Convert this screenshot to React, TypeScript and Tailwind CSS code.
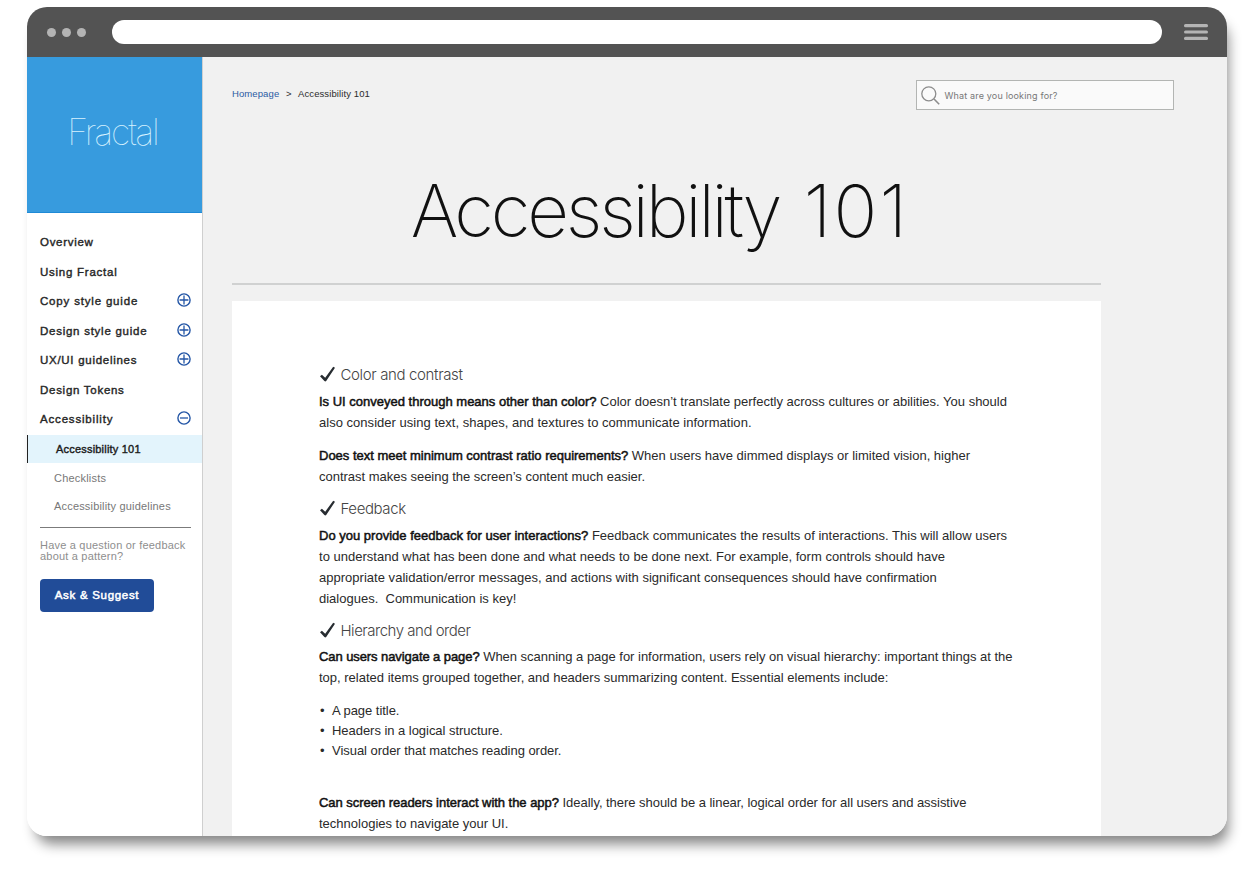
import type { ReactNode } from "react";

function Expander({ open = false }: { open?: boolean }) {
  return (
    <svg width="14" height="14" viewBox="0 0 14 14" fill="none" stroke="#2456a6" className="shrink-0">
      <circle cx="7" cy="7" r="6.1" strokeWidth="1.4" />
      <path d={open ? "M3 7H11" : "M2.6 7H11.4M7 2.6V11.4"} strokeWidth="1.3" />
    </svg>
  );
}

function NavItem({ children, className, expander }: { children: ReactNode; className: string; expander?: "open" | "closed" }) {
  return (
    <li className={`flex justify-between pr-[11px] pl-[13px] text-[11.5px] leading-[16px] whitespace-nowrap text-[#262626] [-webkit-text-stroke:0.4px_#262626] ${className}`}>
      <span>{children}</span>
      {expander && <Expander open={expander === "open"} />}
    </li>
  );
}

function Heading({ children, className }: { children: ReactNode; className: string }) {
  return (
    <h2 className={`flex h-[26px] items-center gap-[4.5px] font-['Inter'] text-[15px] font-light whitespace-nowrap text-[#444] ${className}`}>
      <svg width="17" height="16" viewBox="0 0 17 16" fill="#272c31" className="relative -top-px">
        <path d="M1 10.2 2.9 8.8 6.2 11.7 14.2.8 16 1.8 7.2 15Q6.3 15.8 5.4 14.9Z" />
      </svg>
      {children}
    </h2>
  );
}

function Strong({ children, className = "" }: { children: ReactNode; className?: string }) {
  return <span className={`text-[#111] [-webkit-text-stroke:0.5px_#111] ${className}`}>{children}</span>;
}

function Line({ children, className = "" }: { children: ReactNode; className?: string }) {
  return <span className={`block h-[21px] leading-[21px] whitespace-pre ${className}`}>{children}</span>;
}

export default function App() {
  return (
    <div className="h-[876px] w-[1260px] overflow-hidden bg-white pt-[7px] pl-[27px] font-['Liberation_Sans',sans-serif]">
      <div className="flex h-[829px] w-[1200px] flex-col overflow-hidden rounded-[20px] bg-white shadow-[5px_12px_13px_-4px_rgba(0,0,0,0.48)]">
        <div className="flex h-[50px] shrink-0 items-center bg-[#535353] pl-[20px]">
          <div className="flex gap-[6px]">
            <i className="size-[9px] rounded-full bg-[#b4b4b4]" />
            <i className="size-[9px] rounded-full bg-[#b4b4b4]" />
            <i className="size-[9px] rounded-full bg-[#b4b4b4]" />
          </div>
          <div className="ml-[26px] h-[24px] w-[1050px] rounded-full bg-white" />
          <svg width="24" height="16" viewBox="0 0 24 16" className="ml-[22px] fill-[#b4b4b4]">
            <rect width="24" height="3.2" rx="1.5" />
            <rect y="6.4" width="24" height="3.2" rx="1.5" />
            <rect y="12.8" width="24" height="3.2" rx="1.5" />
          </svg>
        </div>
        <div className="flex min-h-0 flex-1">
          <aside className="w-[176px] shrink-0 border-r border-[#cfcfcf] bg-white">
            <div className="flex h-[156px] items-center justify-center border-b border-[#1f8ad6] bg-[#379bde] pr-[4px] pb-[5px]">
              <span className="font-['Inter'] text-[36px] leading-none font-thin tracking-[-2.1px] text-[#d8f2ff]">Fractal</span>
            </div>
            <ul>
              <NavItem className="mt-[21px] h-[30px] tracking-[0.7px]">Overview</NavItem>
              <NavItem className="h-[29px] tracking-[0.75px]">Using Fractal</NavItem>
              <NavItem className="h-[30px] tracking-[0.82px]" expander="closed">Copy style guide</NavItem>
              <NavItem className="h-[29px] tracking-[0.74px]" expander="closed">Design style guide</NavItem>
              <NavItem className="h-[30px] tracking-[0.72px]" expander="closed">UX/UI guidelines</NavItem>
              <NavItem className="h-[29px] tracking-[0.72px]">Design Tokens</NavItem>
              <NavItem className="h-[22px] tracking-[0.82px]" expander="open">Accessibility</NavItem>
            </ul>
            <ul className="whitespace-nowrap text-[#777]">
              <li className="mt-[2px] h-[28px] border-l border-[#222] bg-[#e3f4fc] pl-[28px] text-[11px] leading-[29px] tracking-[0.2px] text-[#1c1c1c] [-webkit-text-stroke:0.4px_#1c1c1c]">Accessibility 101</li>
              <li className="h-[29px] pl-[27px] text-[11px] leading-[31px] tracking-[0.2px]">Checklists</li>
              <li className="h-[28px] pl-[27px] text-[11px] leading-[29px] tracking-[0.18px]">Accessibility guidelines</li>
            </ul>
            <div className="mt-[7px] mr-[11px] ml-[13px] border-t border-[#7b7b7b] pt-[12px]">
              <p className="text-[11px] leading-[11px] tracking-[0.2px] whitespace-nowrap text-[#8e8e8e]">
                Have a question or feedback
                <br />
                about a pattern?
              </p>
              <button className="mt-[17px] h-[33px] w-[114px] rounded-[4px] bg-[#214c98] text-[11.5px] tracking-[0.7px] whitespace-nowrap text-white [-webkit-text-stroke:0.5px_white]">Ask &amp; Suggest</button>
            </div>
          </aside>
          <main className="flex-1 bg-[#f1f1f1] pl-[29px]">
            <div className="flex h-[53px] items-start justify-between pt-[23px] pr-[53px]">
              <nav className="flex pt-[6px] text-[9.5px] leading-[16px] tracking-[0.1px] whitespace-nowrap text-[#2c2c2c]">
                <span className="w-[54px] text-[#2b5ba3]">Homepage</span>
                <span className="w-[12px]">&gt;</span>
                <span>Accessibility 101</span>
              </nav>
              <div className="flex h-[30px] w-[258px] items-center gap-[4.5px] border border-[#b3b5b3] bg-[#fafafa] pl-[4px]">
                <svg width="19" height="19" viewBox="0 0 19 19" fill="none" stroke="#8d8d8d" strokeWidth="1.3">
                  <circle cx="7.8" cy="7.8" r="7" />
                  <path d="M13 13 18.2 18.2" strokeWidth="1.6" />
                </svg>
                <span className="pt-px font-['Inter'] text-[9px] tracking-[0.17px] whitespace-nowrap text-[#777]">What are you looking for?</span>
              </div>
            </div>
            <h1 className="flex h-[173px] w-[856px] items-center justify-center pt-[29px] font-['Inter'] text-[72.5px] leading-[80px] font-extralight tracking-[-3.2px] whitespace-nowrap text-[#111]">
              Accessibility<span className="ml-[24.5px] tracking-[2.2px]">101</span>
            </h1>
            <div className="h-[2px] w-[869px] bg-[#d0d1d1]" />
            <article className="mt-[16px] h-[560px] w-[869px] bg-white pt-[61px] pl-[87px] text-[13px] text-[#2a2a2a]">
              <Heading className="tracking-[-0.36px]">Color and contrast</Heading>
              <p className="mt-[3px]">
                <Line><Strong>Is UI conveyed through means other than color?</Strong> Color doesn’t translate perfectly across cultures or abilities. You should</Line>
                <Line className="tracking-[0.025px]">also consider using text, shapes, and textures to communicate information.</Line>
              </p>
              <p className="mt-[12px]">
                <Line><Strong>Does text meet minimum contrast ratio requirements?</Strong> When users have dimmed displays or limited vision, higher</Line>
                <Line className="tracking-[-0.02px]">contrast makes seeing the screen’s content much easier.</Line>
              </p>
              <Heading className="mt-[9px] tracking-[-0.4px]">Feedback</Heading>
              <p className="mt-[3px]">
                <Line className="tracking-[0.01px]"><Strong>Do you provide feedback for user interactions?</Strong> Feedback communicates the results of interactions. This will allow users</Line>
                <Line className="tracking-[0.015px]">to understand what has been done and what needs to be done next. For example, form controls should have</Line>
                <Line className="tracking-[0.02px]">appropriate validation/error messages, and actions with significant consequences should have confirmation</Line>
                <Line>dialogues.  Communication is key!</Line>
              </p>
              <Heading className="mt-[9px] tracking-[-0.48px]">Hierarchy and order</Heading>
              <p className="mt-[2px]">
                <Line className="tracking-[-0.02px]"><Strong className="tracking-[-0.08px]">Can users navigate a page?</Strong> When scanning a page for information, users rely on visual hierarchy: important things at the</Line>
                <Line>top, related items grouped together, and headers summarizing content. Essential elements include:</Line>
              </p>
              <ul className="mt-[13px] leading-[20px] tracking-[-0.04px] whitespace-nowrap">
                <li className="flex"><span className="w-[13px] pl-px">•</span>A page title.</li>
                <li className="flex"><span className="w-[13px] pl-px">•</span>Headers in a logical structure.</li>
                <li className="flex"><span className="w-[13px] pl-px">•</span>Visual order that matches reading order.</li>
              </ul>
              <p className="mt-[31px]">
                <Line className="tracking-[-0.035px]"><Strong>Can screen readers interact with the app?</Strong> Ideally, there should be a linear, logical order for all users and assistive</Line>
                <Line>technologies to navigate your UI.</Line>
              </p>
            </article>
          </main>
        </div>
      </div>
    </div>
  );
}
